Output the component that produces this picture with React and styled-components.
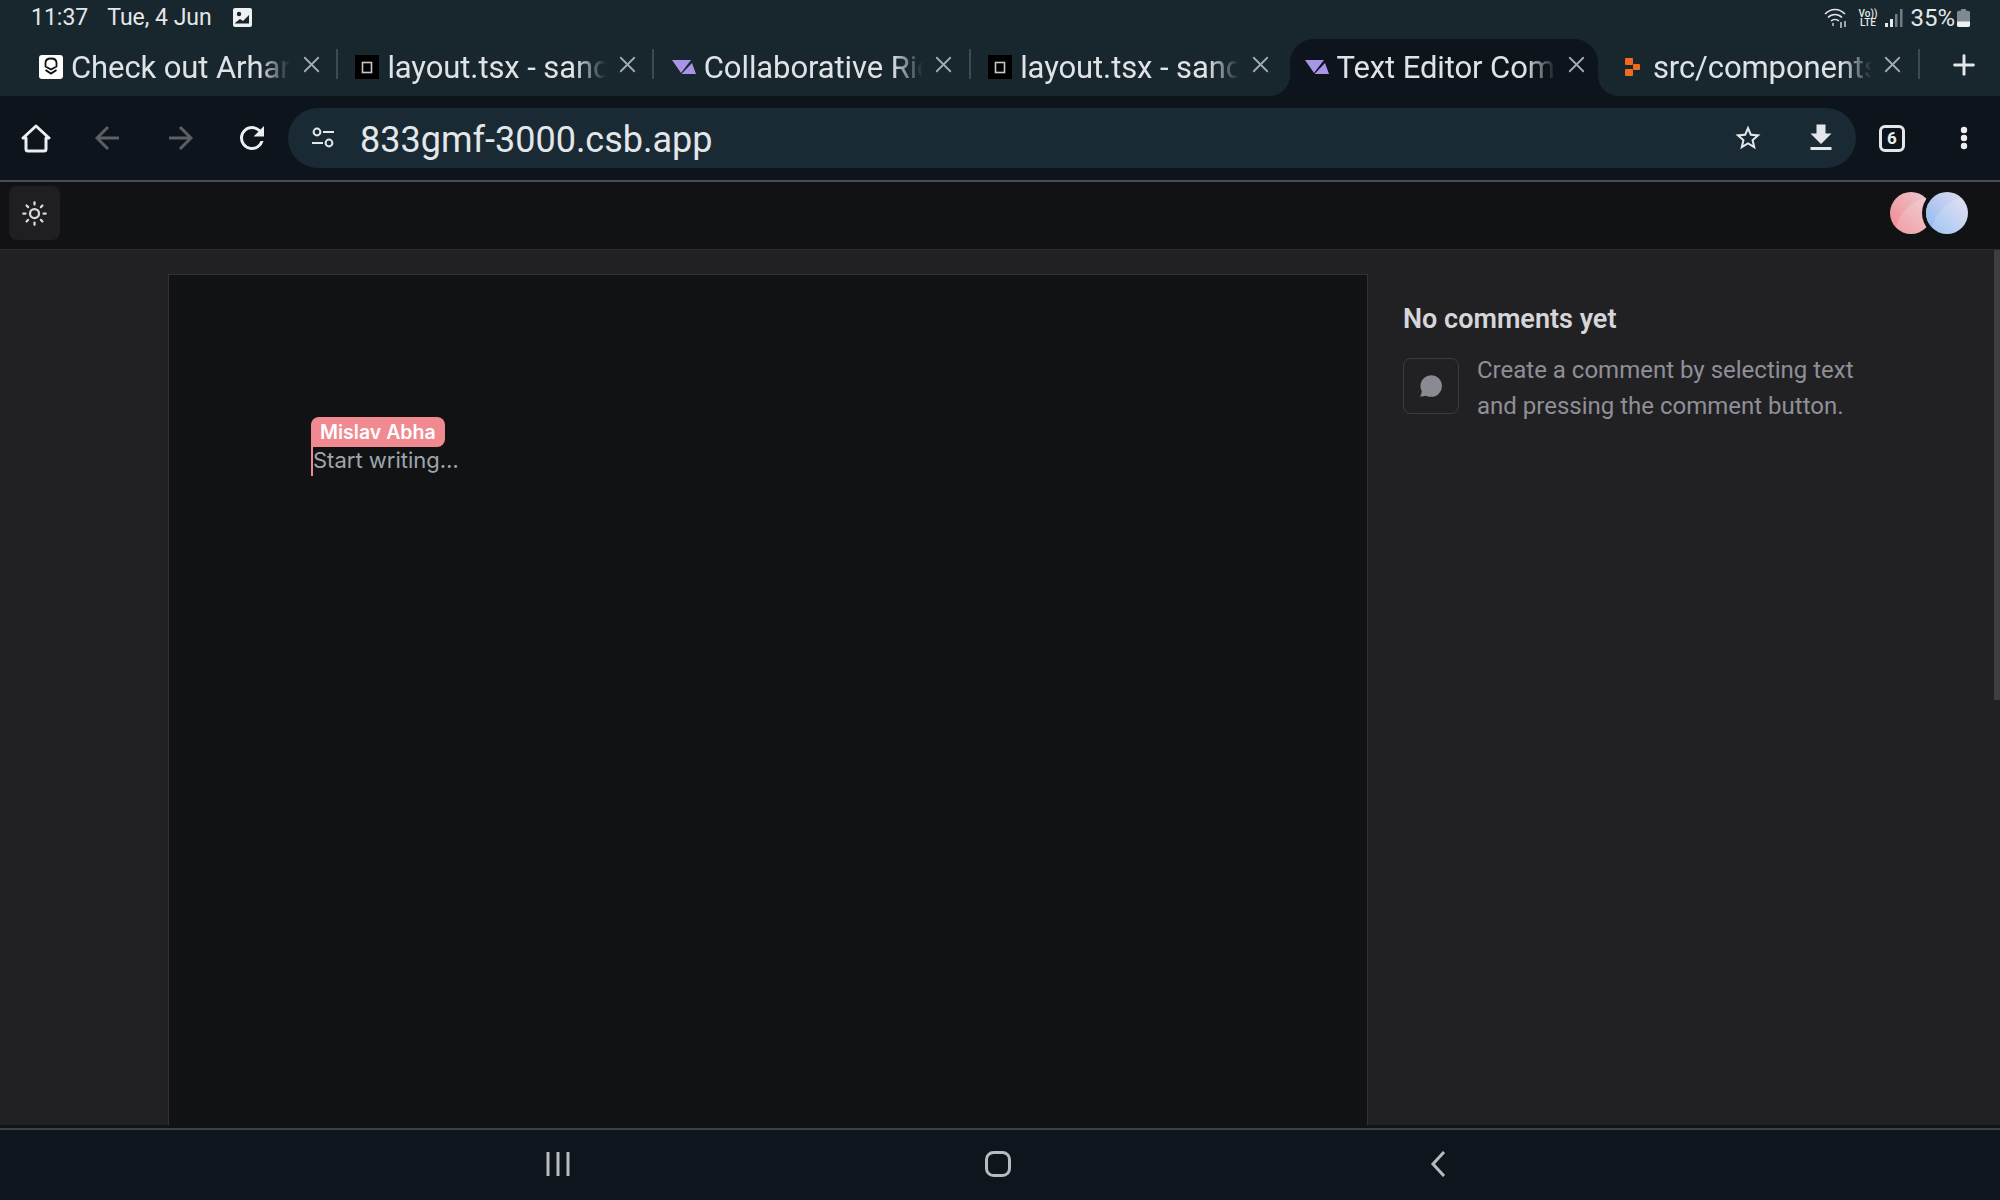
import { Sun, X, Plus } from "lucide-react";
import styled, { createGlobalStyle } from "styled-components";

const GlobalStyle = createGlobalStyle`
  html, body {
    margin: 0;
    height: 100%;
    overflow: hidden;
    background: #111214;
    font-family: Roboto, "Liberation Sans", sans-serif;
  }
  #root {
    height: 100%;
  }
`;

const Screen = styled.div`
  width: 2000px;
  height: 1200px;
  display: flex;
  flex-direction: column;
`;

/* android status bar */
const StatusBar = styled.div`
  height: 39px;
  flex: none;
  background: #18262e;
  color: #e4e7e9;
  font-size: 23px;
  display: flex;
  align-items: center;
  padding: 0 30px 4px 31px;
  box-sizing: border-box;
`;
const StatusDate = styled.span`
  margin-left: 19px;
`;
const StatusPic = styled.svg`
  margin-left: 21px;
`;
const StatusRight = styled.div`
  margin-left: auto;
  display: flex;
  align-items: center;
`;
const Volte = styled.div`
  font-size: 10px;
  line-height: 9px;
  font-weight: 500;
  margin: 0 8px 0 10px;
  text-align: center;
`;
const Percent = styled.span`
  font-size: 24px;
  margin: 0 2px 0 7px;
`;

/* chrome tabs */
const TabStrip = styled.div`
  height: 57px;
  flex: none;
  background: #18262e;
  display: flex;
  padding-left: 20px;
`;
const Tab = styled.div`
  position: relative;
  flex: none;
  box-sizing: border-box;
  width: ${(p) => (p.$active ? "308.4px" : "316.4px")};
  margin: ${(p) => (p.$active ? "0 4px" : "0")};
  padding-left: ${(p) => (p.$active ? "15px" : "19px")};
  display: flex;
  align-items: flex-start;
  background: ${(p) => (p.$active ? "#0e141c" : "transparent")};
  border-radius: 24px 24px 0 0;

  ${(p) =>
    p.$active &&
    `
    &::before, &::after {
      content: "";
      position: absolute;
      bottom: 0;
      width: 20px;
      height: 20px;
    }
    &::before {
      left: -20px;
      background: radial-gradient(circle at 0 0, transparent 19.5px, #0e141c 20px);
    }
    &::after {
      right: -20px;
      background: radial-gradient(circle at 100% 0, transparent 19.5px, #0e141c 20px);
    }
  `}
`;
const Favicon = styled.div`
  flex: none;
  width: 24px;
  height: 24px;
  margin-top: 16px;
  display: flex;
  align-items: center;
  justify-content: center;
`;
const TabTitle = styled.div`
  flex: none;
  width: 219px;
  margin-left: 8px;
  margin-top: 10px;
  overflow: hidden;
  white-space: nowrap;
  font-size: 31px;
  letter-spacing: -0.1px;
  line-height: 38px;
  color: #dfe3e6;
  mask-image: linear-gradient(to right, #000 86%, transparent 100%);
`;
const TabClose = styled(X)`
  flex: none;
  margin: 12px 0 0 7.5px;
  color: #a4abb0;
`;
const TabDivider = styled.div`
  width: 2px;
  height: 30px;
  margin: 10px 0 0 11.5px;
  background: #3d4a52;
  flex: none;
`;
const NewTab = styled(Plus)`
  margin: 10px 0 0 30px;
  color: #e6e8ea;
`;

/* chrome toolbar */
const Toolbar = styled.div`
  height: 86px;
  flex: none;
  box-sizing: border-box;
  background: #0e141c;
  border-bottom: 2px solid #474c54;
  display: flex;
  align-items: center;
`;
const ToolSlot = styled.div`
  width: 72px;
  flex: none;
  display: flex;
  align-items: center;
  justify-content: center;
  color: ${(p) => (p.$off ? "#5c6064" : "#eceef0")};
`;
const AddressBar = styled.div`
  flex: 1;
  height: 60px;
  border-radius: 30px;
  background: #1a2a34;
  display: flex;
  align-items: center;
  padding: 0 17px 0 23px;
  color: #e4e7ea;
`;
const Url = styled.div`
  font-size: 36px;
  margin-left: 25px;
  padding-top: 4px;
`;
const AddressIcons = styled.div`
  margin-left: auto;
  display: flex;
  align-items: center;
  gap: 40px;
`;
const TabCount = styled.div`
  width: 26px;
  height: 27px;
  box-sizing: border-box;
  border: 3px solid #e4e7ea;
  border-radius: 6px;
  font-size: 17px;
  font-weight: 700;
  display: flex;
  align-items: center;
  justify-content: center;
`;

/* app header */
const AppHeader = styled.div`
  height: 68px;
  flex: none;
  box-sizing: border-box;
  background: #111214;
  border-bottom: 1px solid #2c2c2e;
  display: flex;
  justify-content: space-between;
  align-items: flex-start;
  padding: 4px 32px 0 9px;
`;
const ThemeButton = styled.div`
  width: 51px;
  height: 54px;
  border-radius: 8px;
  background: #1f1f21;
  color: #d8d8da;
  display: flex;
  align-items: center;
  justify-content: center;
`;
const Avatars = styled.div`
  display: flex;
  margin-top: 6px;
`;
const Avatar = styled.div`
  width: 42px;
  height: 42px;
  border-radius: 50%;
  background:
    radial-gradient(circle at 105% 105%, rgba(255, 255, 255, 0.16) 62%, transparent 63%),
    linear-gradient(45deg, ${(p) => p.$from}, ${(p) => p.$to});
  & + & {
    margin-left: -6px;
    box-shadow: 0 0 0 4px #111214;
  }
`;

/* page body */
const Main = styled.div`
  position: relative;
  flex: 1;
  min-height: 0;
  background: #212123;
  border-bottom: 3px solid #111214;
  display: flex;
  padding: 24px 0 0 168px;
`;
const EditorCard = styled.div`
  width: 1200px;
  flex: none;
  box-sizing: border-box;
  background: #111214;
  border: 1px solid #323234;
  border-bottom: none;
  padding: 172px 0 0 142px;
`;
const Placeholder = styled.div`
  position: relative;
  display: inline-block;
  font-family: Inter, sans-serif;
  font-size: 22px;
  line-height: 27px;
  padding-bottom: 2px;
  color: #a0a5ac;
  border-left: 2px solid #f08a90;
`;
const CaretLabel = styled.div`
  position: absolute;
  left: -2px;
  bottom: 100%;
  height: 30px;
  padding: 0 9px;
  white-space: nowrap;
  border-radius: 8px 8px 8px 0;
  background: #f08a90;
  color: #fff;
  font-family: Inter, sans-serif;
  font-size: 19.5px;
  font-weight: 600;
  line-height: 30px;
`;
const SidePanel = styled.div`
  padding: 27px 0 0 35px;
`;
const PanelTitle = styled.div`
  font-size: 27px;
  font-weight: 600;
  line-height: 36px;
  color: #d6d6da;
`;
const EmptyNote = styled.div`
  display: flex;
  margin-top: 21px;
`;
const NoteIcon = styled.div`
  width: 56px;
  height: 56px;
  flex: none;
  box-sizing: border-box;
  border: 1px solid #3c3c3f;
  border-radius: 8px;
  padding-right: 2px;
  color: #8a8a92;
  display: flex;
  align-items: center;
  justify-content: center;
`;
const NoteText = styled.div`
  margin: -6px 0 0 18px;
  font-size: 24px;
  line-height: 36px;
  color: #8f8f98;
`;
const ScrollThumb = styled.div`
  position: absolute;
  top: 0;
  right: 0;
  width: 6px;
  height: 450px;
  background: #3e3e40;
`;

/* android nav bar */
const NavBar = styled.div`
  height: 72px;
  flex: none;
  box-sizing: border-box;
  background: #0f151d;
  border-top: 2px solid #3c4148;
  display: flex;
  justify-content: center;
  align-items: center;
  padding: 0 4px 2px 0;
  color: #b9bcbf;
`;
const NavSlot = styled.div`
  width: 440px;
  display: flex;
  justify-content: center;
`;

function Svg({ size = 24, h, box, children, ...rest }) {
  return (
    <svg width={size} height={h || size} viewBox={box || "0 0 24 24"} fill="currentColor" {...rest}>
      {children}
    </svg>
  );
}

const HomeIcon = () => (
  <Svg size={30} box="0 0 30 30">
    <path d="M2 15 15 3l13 12h-3v11a2 2 0 0 1-2 2H7a2 2 0 0 1-2-2V15z" fill="none" stroke="currentColor" strokeWidth="3" strokeLinejoin="round" />
  </Svg>
);
const ArrowIcon = ({ flip }) => (
  <Svg size={26} box="0 0 26 26" style={flip ? { transform: "scaleX(-1)" } : undefined}>
    <path d="M24 13H2M13 2 2 13l11 11" fill="none" stroke="currentColor" strokeWidth="3" />
  </Svg>
);
const ReloadIcon = () => (
  <Svg size={36}>
    <path d="M17.65 6.35A7.95 7.95 0 0 0 12 4a8 8 0 1 0 7.73 10h-2.08A6 6 0 1 1 12 6c1.66 0 3.14.69 4.22 1.78L13 11h7V4l-2.35 2.35z" />
  </Svg>
);
const TuneIcon = () => (
  <Svg size={24} box="0 0 24 24">
    <circle cx="6" cy="6" r="3.4" fill="none" stroke="currentColor" strokeWidth="2" />
    <path d="M12 6h11M1 17h11" stroke="currentColor" strokeWidth="2.2" fill="none" />
    <circle cx="18" cy="17" r="3.4" fill="none" stroke="currentColor" strokeWidth="2" />
  </Svg>
);
const StarIcon = () => (
  <Svg size={30}>
    <path d="M22 9.24l-7.19-.62L12 2 9.19 8.63 2 9.24l5.46 4.73L5.82 21 12 17.27 18.18 21l-1.63-7.03L22 9.24zM12 15.4l-3.76 2.27 1-4.28-3.32-2.88 4.38-.38L12 6.1l1.71 4.04 4.38.38-3.32 2.88 1 4.28L12 15.4z" />
  </Svg>
);
const DownloadIcon = () => (
  <Svg size={36}>
    <path d="M19 9h-4V3H9v6H5l7 7 7-7zM5 18v2h14v-2H5z" />
  </Svg>
);
const MenuIcon = () => (
  <Svg size={8} h={24} box="0 0 8 24">
    <circle cx="4" cy="4" r="3.2" />
    <circle cx="4" cy="12" r="3.2" />
    <circle cx="4" cy="20" r="3.2" />
  </Svg>
);

const ShieldFav = () => (
  <Svg>
    <rect width="24" height="24" rx="3" fill="#fff" />
    <path d="M12 3.500c3.200 0 5.500 1.700 5.500 4.500v3.500L12 14.500l-5.500-3V8c0-2.800 2.300-4.500 5.500-4.500z" fill="none" stroke="#111" strokeWidth="1.800" strokeLinejoin="round" />
    <path d="M6.500 15 12 18.500l5.500-3.500" fill="none" stroke="#111" strokeWidth="2" />
  </Svg>
);
const SandboxFav = () => (
  <Svg>
    <rect width="24" height="24" fill="#000" />
    <rect x="7.500" y="7.500" width="9" height="10" fill="none" stroke="#c8c8c8" strokeWidth="1.600" />
  </Svg>
);
const TiptapFav = () => (
  <Svg h={14} box="0 0 24 14">
    <path d="M0 0h19L9 13z" fill="#a995e6" />
    <path d="M9.500 14 20 3l4 11z" fill="#a995e6" />
  </Svg>
);
const PrototypeFav = () => (
  <Svg size={16} h={18} box="0 0 16 18">
    <rect width="8" height="7" rx="1" fill="#f26a1b" />
    <rect x="8" y="6" width="7" height="6" rx="1" fill="#f26a1b" />
    <rect y="11" width="8" height="7" rx="1" fill="#f26a1b" />
  </Svg>
);

const tabs = [
  { title: "Check out Arhan's profile", icon: <ShieldFav />, divider: true },
  { title: "layout.tsx - sandbox", icon: <SandboxFav />, divider: true },
  { title: "Collaborative Rich Text", icon: <TiptapFav />, divider: true },
  { title: "layout.tsx - sandbox", icon: <SandboxFav /> },
  { title: "Text Editor Component", icon: <TiptapFav />, active: true },
  { title: "src/components/editor", icon: <PrototypeFav />, divider: true },
];

export default function App() {
  return (
    <Screen>
      <GlobalStyle />
      <StatusBar>
        <span>11:37</span>
        <StatusDate>Tue, 4 Jun</StatusDate>
        <StatusPic width="19" height="19" viewBox="0 0 19 19">
          <rect width="19" height="19" rx="2" fill="#eef0f1" />
          <circle cx="6" cy="6" r="2.2" fill="#18262e" />
          <path d="M2 15l5-4 3 2 6-6v8.5H2z" fill="#18262e" />
        </StatusPic>
        <StatusRight>
          <svg width="26" height="22" viewBox="0 0 24 22" fill="none" stroke="currentColor" strokeWidth="1.6">
            <path d="M1 7c6-6 14-6 20 0M4 10.500c4-4 10-4 14 0M7 14c2.300-2 5.700-2 8 0" />
            <path d="M9 19v-3M17 21v-6M21 20v-6" strokeWidth="1.3" />
          </svg>
          <Volte>
            Vo))
            <br />
            LTE
          </Volte>
          <svg width="18" height="18" viewBox="0 0 18 18" fill="currentColor">
            <rect x="0" y="14" width="3" height="4" />
            <rect x="5" y="10" width="3" height="8" />
            <rect x="10" y="5" width="2.500" height="13" opacity="0.45" />
            <rect x="15" y="0" width="2.500" height="18" opacity="0.45" />
          </svg>
          <Percent>35%</Percent>
          <svg width="13" height="18" viewBox="0 0 13 20" preserveAspectRatio="none">
            <path d="M4 0h5v2h2a2 2 0 0 1 2 2v14a2 2 0 0 1-2 2H2a2 2 0 0 1-2-2V4a2 2 0 0 1 2-2h2z" fill="#7f8a90" />
            <path d="M0 14h13v4a2 2 0 0 1-2 2H2a2 2 0 0 1-2-2z" fill="#eef0f1" />
          </svg>
        </StatusRight>
      </StatusBar>

      <TabStrip>
        {tabs.map((tab, i) => (
          <Tab key={i} $active={tab.active}>
            <Favicon>{tab.icon}</Favicon>
            <TabTitle>{tab.title}</TabTitle>
            <TabClose size={27} strokeWidth={1.6} />
            {tab.divider && <TabDivider />}
          </Tab>
        ))}
        <NewTab size={32} strokeWidth={2.2} />
      </TabStrip>

      <Toolbar>
        <ToolSlot>
          <HomeIcon />
        </ToolSlot>
        <ToolSlot $off>
          <ArrowIcon />
        </ToolSlot>
        <ToolSlot $off>
          <ArrowIcon flip />
        </ToolSlot>
        <ToolSlot>
          <ReloadIcon />
        </ToolSlot>
        <AddressBar>
          <TuneIcon />
          <Url>833gmf-3000.csb.app</Url>
          <AddressIcons>
            <StarIcon />
            <DownloadIcon />
          </AddressIcons>
        </AddressBar>
        <ToolSlot>
          <TabCount>6</TabCount>
        </ToolSlot>
        <ToolSlot>
          <MenuIcon />
        </ToolSlot>
      </Toolbar>

      <AppHeader>
        <ThemeButton>
          <Sun size={27} strokeWidth={2} />
        </ThemeButton>
        <Avatars>
          <Avatar $from="#f0858c" $to="#eccdd6" />
          <Avatar $from="#86b9f2" $to="#e8dcee" />
        </Avatars>
      </AppHeader>

      <Main>
        <EditorCard>
          <Placeholder>
            <CaretLabel>Mislav Abha</CaretLabel>
            Start writing…
          </Placeholder>
        </EditorCard>
        <SidePanel>
          <PanelTitle>No comments yet</PanelTitle>
          <EmptyNote>
            <NoteIcon>
              <Svg size={26}>
                <path d="M13 2a10 10 0 0 1 0 20c-1.700 0-3.300-.4-4.600-1.100L3 22l1.500-5A10 10 0 0 1 13 2z" />
              </Svg>
            </NoteIcon>
            <NoteText>
              Create a comment by selecting text
              <br />
              and pressing the comment button.
            </NoteText>
          </EmptyNote>
        </SidePanel>
        <ScrollThumb />
      </Main>

      <NavBar>
        <NavSlot>
          <Svg size={24} box="0 0 24 24">
            <path d="M2 0v24M12 0v24M22 0v24" stroke="currentColor" strokeWidth="3" fill="none" />
          </Svg>
        </NavSlot>
        <NavSlot>
          <Svg size={26} box="0 0 26 26">
            <rect x="1.500" y="1.500" width="23" height="23" rx="7" fill="none" stroke="currentColor" strokeWidth="3" />
          </Svg>
        </NavSlot>
        <NavSlot>
          <Svg size={16} h={26} box="0 0 16 26">
            <path d="M14 1 3 13l11 12" fill="none" stroke="currentColor" strokeWidth="3" />
          </Svg>
        </NavSlot>
      </NavBar>
    </Screen>
  );
}
